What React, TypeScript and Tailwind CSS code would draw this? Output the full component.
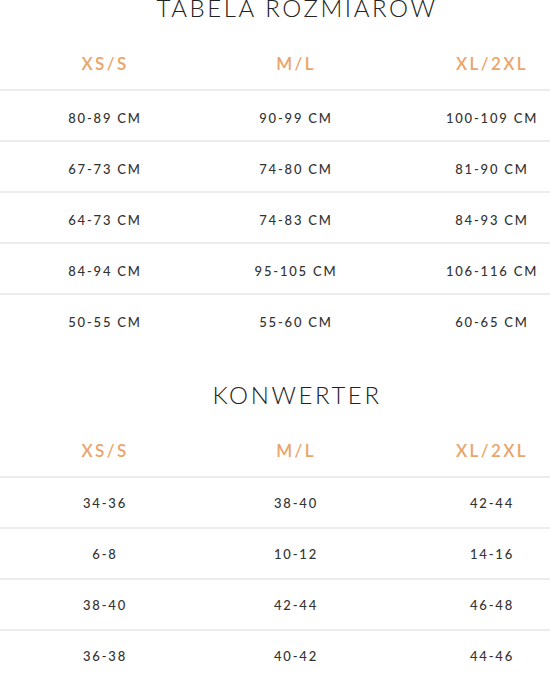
import React from "react";

const font = { fontFamily: "Lato, 'Open Sans', sans-serif" };

type Section = {
  title: string;
  rows: string[][];
  rowPad: string;
};

const sections: Section[] = [
  {
    title: "TABELA ROZMIAROW",
    rowPad: "pt-[17px]",
    rows: [
      ["80-89 CM", "90-99 CM", "100-109 CM"],
      ["67-73 CM", "74-80 CM", "81-90 CM"],
      ["64-73 CM", "74-83 CM", "84-93 CM"],
      ["84-94 CM", "95-105 CM", "106-116 CM"],
      ["50-55 CM", "55-60 CM", "60-65 CM"],
    ],
  },
  {
    title: "KONWERTER",
    rowPad: "pt-[15px]",
    rows: [
      ["34-36", "38-40", "42-44"],
      ["6-8", "10-12", "14-16"],
      ["38-40", "42-44", "46-48"],
      ["36-38", "40-42", "44-46"],
    ],
  },
];

const colW = ["w-[194px]", "w-[188px]", "w-[204px]"];

function Cells({ values, cls }: { values: string[]; cls: string }) {
  return (
    <div className="flex pl-[8px]">
      {values.map((v, i) => (
        <div key={i} className={`${colW[i]} shrink-0 text-center ${cls}`}>
          <span className="inline-block">{v}</span>
        </div>
      ))}
    </div>
  );
}

function Table({ s, first }: { s: Section; first: boolean }) {
  return (
    <div className={first ? "-mt-[8px]" : "mt-[35px]"}>
      <div className="w-[594px] h-[32px] text-center text-[24px] leading-[32px] font-light tracking-[2.6px] text-[#222]">
        {s.title}
      </div>
      <div className="h-[67px] pt-[30px] border-b-2 border-[#ececec]">
        <Cells
          values={["XS/S", "M/L", "XL/2XL"]}
          cls="text-[17px] leading-[20px] font-semibold tracking-[2.4px] text-[#eaa56a]"
        />
      </div>
      {s.rows.map((r, i) => (
        <div
          key={i}
          className={`${i < s.rows.length - 1 ? "h-[51px] border-b-2 border-[#ececec]" : "h-[49px]"} ${s.rowPad}`}
        >
          <Cells values={r} cls="text-[13px] leading-[20px] font-medium tracking-[1.8px] text-[#333]" />
        </div>
      ))}
    </div>
  );
}

export default function App() {
  return (
    <div className="w-[550px] h-[700px] overflow-hidden bg-white" style={font}>
      <div className="w-[600px]">
        {sections.map((s, i) => (
          <Table key={i} s={s} first={i === 0} />
        ))}
      </div>
    </div>
  );
}
